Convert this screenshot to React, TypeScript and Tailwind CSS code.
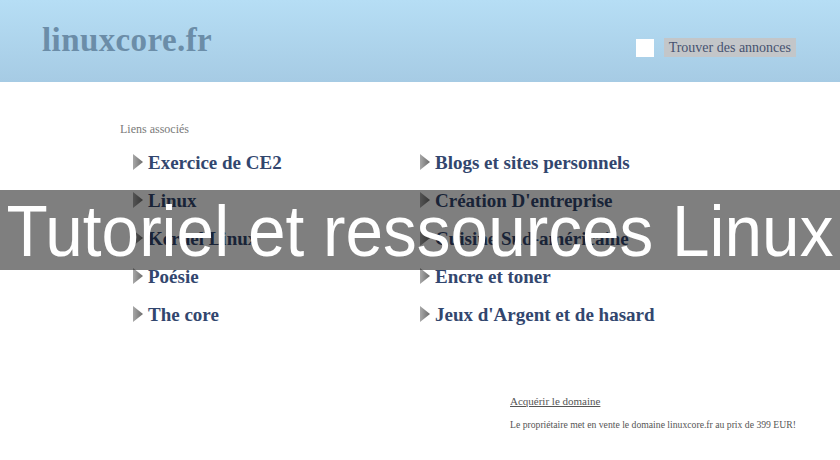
import React from 'react';

const leftLinks = ['Exercice de CE2', 'Linux', 'Kernel Linux', 'Poésie', 'The core'];
const rightLinks = [
    'Blogs et sites personnels',
    "Création D'entreprise",
    'Cuisine Sud-américaine',
    'Encre et toner',
    "Jeux d'Argent et de hasard",
];

const serif = "font-['Liberation_Serif','DejaVu_Serif',serif]";

const Arrow = () => (
    <svg width="10" height="16" viewBox="0 0 10 16" className="shrink-0">
        <defs>
            <linearGradient id="arr" x1="0" y1="0" x2="1" y2="0">
                <stop offset="0" stopColor="#a8a8a8" />
                <stop offset="1" stopColor="#6c6c6c" />
            </linearGradient>
        </defs>
        <polygon points="0,0 10,8 0,16" fill="url(#arr)" />
    </svg>
);

const LinkItem = ({ label }: { label: string }) => (
    <div className="flex items-center gap-[5px] h-[38px]">
        <Arrow />
        <span className={`${serif} font-bold text-[19px] text-[#32466e] leading-none`}>{label}</span>
    </div>
);

const App = () => {
    return (
        <div className="relative w-[840px] h-[460px] bg-white overflow-hidden">
            {/* Header */}
            <div className="h-[82px] bg-gradient-to-b from-[#b6def5] to-[#a6cbe4] flex items-start justify-between pl-[42px] pr-[44px] pt-[24px]">
                <div className={`${serif} text-[33px] font-bold text-[#6b8da8] leading-none tracking-[0.4px]`}>
                    linuxcore.fr
                </div>
                <div className="flex items-center gap-[10px] mt-[14px]">
                    <div className="w-[18px] h-[18px] bg-white" />
                    <div className={`${serif} bg-[#c3c6c9] text-[#465270] text-[14px] px-[5px] h-[19px] flex items-center`}>
                        Trouver des annonces
                    </div>
                </div>
            </div>

            {/* Links */}
            <div className="pl-[120px] pt-[38px]">
                <div className={`${serif} text-[12px] text-[#7a7a7a]`}>Liens associés</div>
                <div className="flex mt-[5px] pl-[13px]">
                    <div className="w-[287px] flex flex-col">
                        {leftLinks.map((l) => (
                            <LinkItem key={l} label={l} />
                        ))}
                    </div>
                    <div className="flex flex-col">
                        {rightLinks.map((l) => (
                            <LinkItem key={l} label={l} />
                        ))}
                    </div>
                </div>
            </div>

            {/* Domain sale */}
            <div className={`${serif} pl-[510px] pt-[60px] text-[#555]`}>
                <div className="text-[11px] underline">Acquérir le domaine</div>
                <div className="text-[9.7px] mt-[8px]">
                    Le propriétaire met en vente le domaine linuxcore.fr au prix de 399 EUR!
                </div>
            </div>

            {/* Overlay title */}
            <div className="absolute left-0 right-0 top-[190px] h-[80px] bg-black/50 flex items-center justify-center">
                <span className="font-['Liberation_Sans',Arial,sans-serif] text-white text-[73px] leading-none whitespace-nowrap scale-x-[0.925]">
                    Tutoriel et ressources Linux
                </span>
            </div>
        </div>
    );
};

export default App;
